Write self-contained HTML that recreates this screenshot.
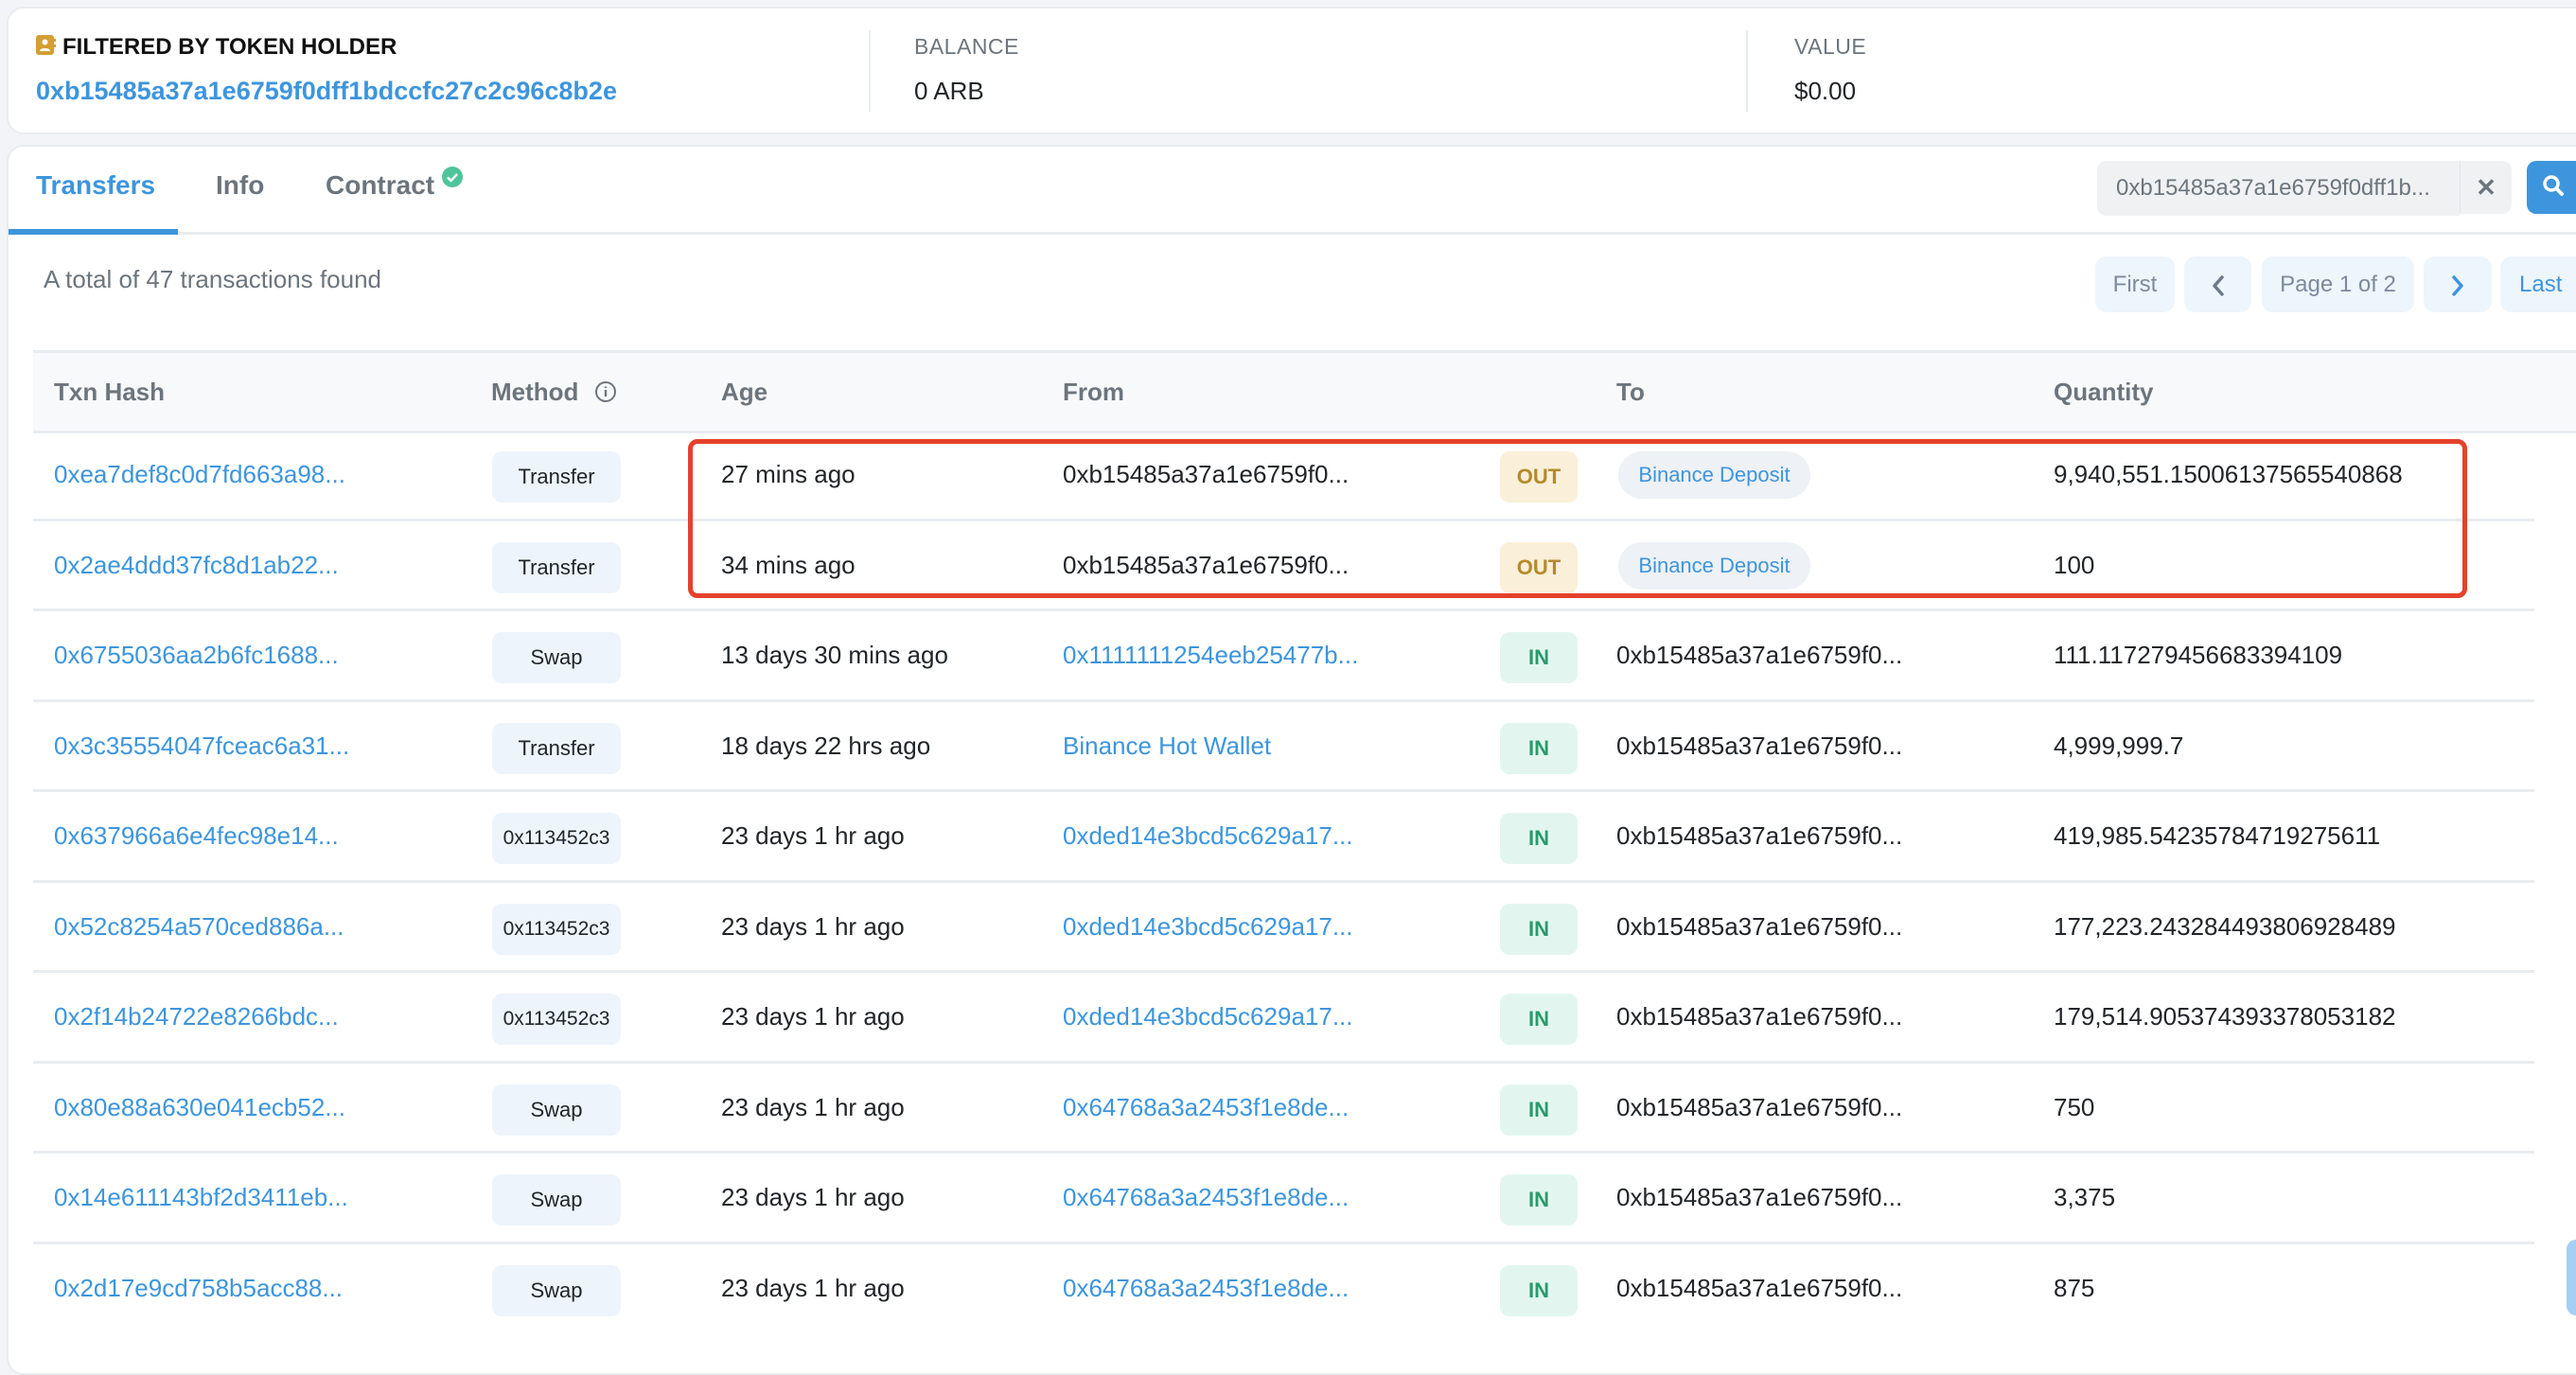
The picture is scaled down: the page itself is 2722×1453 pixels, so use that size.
<!DOCTYPE html>
<html><head><meta charset="utf-8"><style>
*{box-sizing:border-box;margin:0;padding:0}
body{width:2722px;height:1398px;overflow:hidden;background:#f3f4f7;font-family:"Liberation Sans",sans-serif;position:relative;color:#212529}
.a{position:absolute;white-space:nowrap}
.card1{position:absolute;left:7px;top:7px;width:2740px;height:135px;background:#fff;border:2px solid #e9ecef;border-radius:18px}
.card2{position:absolute;left:7px;top:153px;width:2740px;height:1300px;background:#fff;border:2px solid #e9ecef;border-radius:18px}
.blue{color:#3d95dd}
.lbl{font-size:23px;color:#6c757d;letter-spacing:.5px}
.row{position:absolute;left:35px;width:2643px;height:95.5px;border-bottom:3px solid #e9ecef}
.c{position:absolute;top:0;height:93px;line-height:93px;font-size:26px;white-space:nowrap}
.m{position:absolute;top:22px;left:485px;width:136px;height:54px;background:#edf4fc;border-radius:10px;font-size:22px;text-align:center;line-height:54px;color:#212529}
.io{position:absolute;top:22px;left:1550px;width:82px;height:54px;border-radius:10px;font-size:22px;font-weight:bold;text-align:center;line-height:54px}
.out{background:#faefd8;color:#b48a2c}
.in{background:#e2f6ef;color:#2a9a6b}
.pill{position:absolute;top:22px;left:1675px;width:203px;height:50px;background:#eef1f5;border-radius:25px;font-size:22px;color:#3d95dd;text-align:center;line-height:50px}
.pg{position:absolute;top:271px;height:59px;background:#edf5fd;border-radius:12px;font-size:24px;line-height:59px;text-align:center;color:#7c8a9a}
.th{position:absolute;top:372px;height:85px;line-height:85px;font-size:26px;font-weight:bold;color:#6c757d}
</style></head><body>
<div class="card1"></div>
<svg class="a" style="left:38px;top:37px" width="21" height="21" viewBox="0 0 21 21"><rect width="19" height="21" rx="3" fill="#d49f35"/><rect x="18" y="4" width="3" height="3" fill="#d49f35"/><rect x="18" y="10" width="3" height="3" fill="#d49f35"/><circle cx="9.5" cy="7.5" r="3" fill="#fff"/><path d="M4 17c0-4 11-4 11 0z" fill="#fff"/></svg>
<div class="a" style="left:66px;top:36px;font-size:24px;font-weight:bold;color:#111">FILTERED BY TOKEN HOLDER</div>
<div class="a blue" style="left:38px;top:81px;font-size:27px;font-weight:bold">0xb15485a37a1e6759f0dff1bdccfc27c2c96c8b2e</div>
<div class="a" style="left:918px;top:32px;width:2px;height:86px;background:#e9ecef"></div>
<div class="a lbl" style="left:966px;top:36px">BALANCE</div>
<div class="a" style="left:966px;top:81px;font-size:26px">0 ARB</div>
<div class="a" style="left:1845px;top:32px;width:2px;height:86px;background:#e9ecef"></div>
<div class="a lbl" style="left:1896px;top:36px">VALUE</div>
<div class="a" style="left:1896px;top:81px;font-size:26px">$0.00</div>

<div class="card2"></div>
<div class="a" style="left:9px;top:245px;width:2740px;height:3px;background:#e9ecef"></div>
<div class="a" style="left:9px;top:242px;width:179px;height:6px;background:#3d95dd"></div>
<div class="a blue" style="left:38px;top:180px;font-size:28px;font-weight:bold">Transfers</div>
<div class="a" style="left:228px;top:180px;font-size:28px;font-weight:bold;color:#6c757d">Info</div>
<div class="a" style="left:344px;top:180px;font-size:28px;font-weight:bold;color:#6c757d">Contract</div>
<svg class="a" style="left:467px;top:176px" width="22" height="22" viewBox="0 0 22 22"><circle cx="11" cy="11" r="11" fill="#4fc49b"/><path d="M6 11.5l3.5 3.5L16 8" stroke="#fff" stroke-width="2.5" fill="none"/></svg>
<div class="a" style="left:2216px;top:170px;width:383px;height:58px;background:#f0f1f3;border-radius:10px 0 0 10px;font-size:24px;line-height:58px;padding-left:20px;color:#6c757d">0xb15485a37a1e6759f0dff1b...</div>
<div class="a" style="left:2599px;top:170px;width:55px;height:56px;background:#f0f1f3;border-left:1px solid #e1e3e6;border-radius:0 10px 10px 0;text-align:center;line-height:56px;font-size:26px;font-weight:bold;color:#6c757d">✕</div>
<div class="a" style="left:2670px;top:170px;width:70px;height:56px;background:#3d95dd;border-radius:10px"></div>
<svg class="a" style="left:2686px;top:184px" width="26" height="26" viewBox="0 0 26 26"><circle cx="10" cy="10" r="7" stroke="#fff" stroke-width="3.5" fill="none"/><path d="M15 15l6 6" stroke="#fff" stroke-width="4" stroke-linecap="round"/></svg>
<div class="a" style="left:46px;top:280px;font-size:26px;color:#6c757d">A total of 47 transactions found</div>
<div class="pg" style="left:2214px;width:84px">First</div>
<div class="pg" style="left:2308px;width:71px"><svg width="14" height="22" viewBox="0 0 14 22" style="vertical-align:middle"><path d="M11 2L3 11l8 9" stroke="#6c7a8a" stroke-width="3.5" fill="none" stroke-linecap="round" stroke-linejoin="round"/></svg></div>
<div class="pg" style="left:2390px;width:161px">Page 1 of 2</div>
<div class="pg" style="left:2561px;width:72px"><svg width="14" height="22" viewBox="0 0 14 22" style="vertical-align:middle"><path d="M3 2l8 9-8 9" stroke="#3d95dd" stroke-width="3.5" fill="none" stroke-linecap="round" stroke-linejoin="round"/></svg></div>
<div class="pg" style="left:2642px;width:100px;color:#3d95dd;text-align:left;padding-left:20px">Last</div>

<div class="a" style="left:35px;top:370px;width:2687px;height:88px;background:#f8f9fb;border-top:3px solid #e9ecef;border-bottom:3px solid #e9ecef"></div>
<div class="th" style="left:57px">Txn Hash</div>
<div class="th" style="left:519px">Method</div>
<svg class="a" style="left:628px;top:402px" width="24" height="24" viewBox="0 0 24 24"><circle cx="12" cy="12" r="10" stroke="#6c757d" stroke-width="2" fill="none"/><path d="M12 10v7M12 6.5v1.5" stroke="#6c757d" stroke-width="2.4"/></svg>
<div class="th blue" style="left:762px">Age</div>
<div class="th" style="left:1123px">From</div>
<div class="th" style="left:1708px">To</div>
<div class="th" style="left:2170px">Quantity</div>

<div class="row" style="top:455px"><div class="c blue" style="left:22px">0xea7def8c0d7fd663a98...</div><div class="m">Transfer</div><div class="c" style="left:727px">27 mins ago</div><div class="c" style="left:1088px">0xb15485a37a1e6759f0...</div><div class="io out">OUT</div><div class="pill">Binance Deposit</div><div class="c" style="left:2135px">9,940,551.15006137565540868</div></div>
<div class="row" style="top:550.5px"><div class="c blue" style="left:22px">0x2ae4ddd37fc8d1ab22...</div><div class="m">Transfer</div><div class="c" style="left:727px">34 mins ago</div><div class="c" style="left:1088px">0xb15485a37a1e6759f0...</div><div class="io out">OUT</div><div class="pill">Binance Deposit</div><div class="c" style="left:2135px">100</div></div>
<div class="row" style="top:646px"><div class="c blue" style="left:22px">0x6755036aa2b6fc1688...</div><div class="m">Swap</div><div class="c" style="left:727px">13 days 30 mins ago</div><div class="c blue" style="left:1088px">0x1111111254eeb25477b...</div><div class="io in">IN</div><div class="c" style="left:1673px">0xb15485a37a1e6759f0...</div><div class="c" style="left:2135px">111.117279456683394109</div></div>
<div class="row" style="top:741.5px"><div class="c blue" style="left:22px">0x3c35554047fceac6a31...</div><div class="m">Transfer</div><div class="c" style="left:727px">18 days 22 hrs ago</div><div class="c blue" style="left:1088px">Binance Hot Wallet</div><div class="io in">IN</div><div class="c" style="left:1673px">0xb15485a37a1e6759f0...</div><div class="c" style="left:2135px">4,999,999.7</div></div>
<div class="row" style="top:837px"><div class="c blue" style="left:22px">0x637966a6e4fec98e14...</div><div class="m" style="font-size:21px">0x113452c3</div><div class="c" style="left:727px">23 days 1 hr ago</div><div class="c blue" style="left:1088px">0xded14e3bcd5c629a17...</div><div class="io in">IN</div><div class="c" style="left:1673px">0xb15485a37a1e6759f0...</div><div class="c" style="left:2135px">419,985.54235784719275611</div></div>
<div class="row" style="top:932.5px"><div class="c blue" style="left:22px">0x52c8254a570ced886a...</div><div class="m" style="font-size:21px">0x113452c3</div><div class="c" style="left:727px">23 days 1 hr ago</div><div class="c blue" style="left:1088px">0xded14e3bcd5c629a17...</div><div class="io in">IN</div><div class="c" style="left:1673px">0xb15485a37a1e6759f0...</div><div class="c" style="left:2135px">177,223.243284493806928489</div></div>
<div class="row" style="top:1028px"><div class="c blue" style="left:22px">0x2f14b24722e8266bdc...</div><div class="m" style="font-size:21px">0x113452c3</div><div class="c" style="left:727px">23 days 1 hr ago</div><div class="c blue" style="left:1088px">0xded14e3bcd5c629a17...</div><div class="io in">IN</div><div class="c" style="left:1673px">0xb15485a37a1e6759f0...</div><div class="c" style="left:2135px">179,514.905374393378053182</div></div>
<div class="row" style="top:1123.5px"><div class="c blue" style="left:22px">0x80e88a630e041ecb52...</div><div class="m">Swap</div><div class="c" style="left:727px">23 days 1 hr ago</div><div class="c blue" style="left:1088px">0x64768a3a2453f1e8de...</div><div class="io in">IN</div><div class="c" style="left:1673px">0xb15485a37a1e6759f0...</div><div class="c" style="left:2135px">750</div></div>
<div class="row" style="top:1219px"><div class="c blue" style="left:22px">0x14e611143bf2d3411eb...</div><div class="m">Swap</div><div class="c" style="left:727px">23 days 1 hr ago</div><div class="c blue" style="left:1088px">0x64768a3a2453f1e8de...</div><div class="io in">IN</div><div class="c" style="left:1673px">0xb15485a37a1e6759f0...</div><div class="c" style="left:2135px">3,375</div></div>
<div class="row" style="top:1314.5px;border-bottom:none"><div class="c blue" style="left:22px">0x2d17e9cd758b5acc88...</div><div class="m">Swap</div><div class="c" style="left:727px">23 days 1 hr ago</div><div class="c blue" style="left:1088px">0x64768a3a2453f1e8de...</div><div class="io in">IN</div><div class="c" style="left:1673px">0xb15485a37a1e6759f0...</div><div class="c" style="left:2135px">875</div></div>

<div class="a" style="left:727px;top:464px;width:1880px;height:168px;border:5px solid #e5412b;border-radius:10px"></div>
<div class="a" style="left:2712px;top:1310px;width:20px;height:80px;background:#a6cff2;border-radius:10px"></div>
</body></html>
